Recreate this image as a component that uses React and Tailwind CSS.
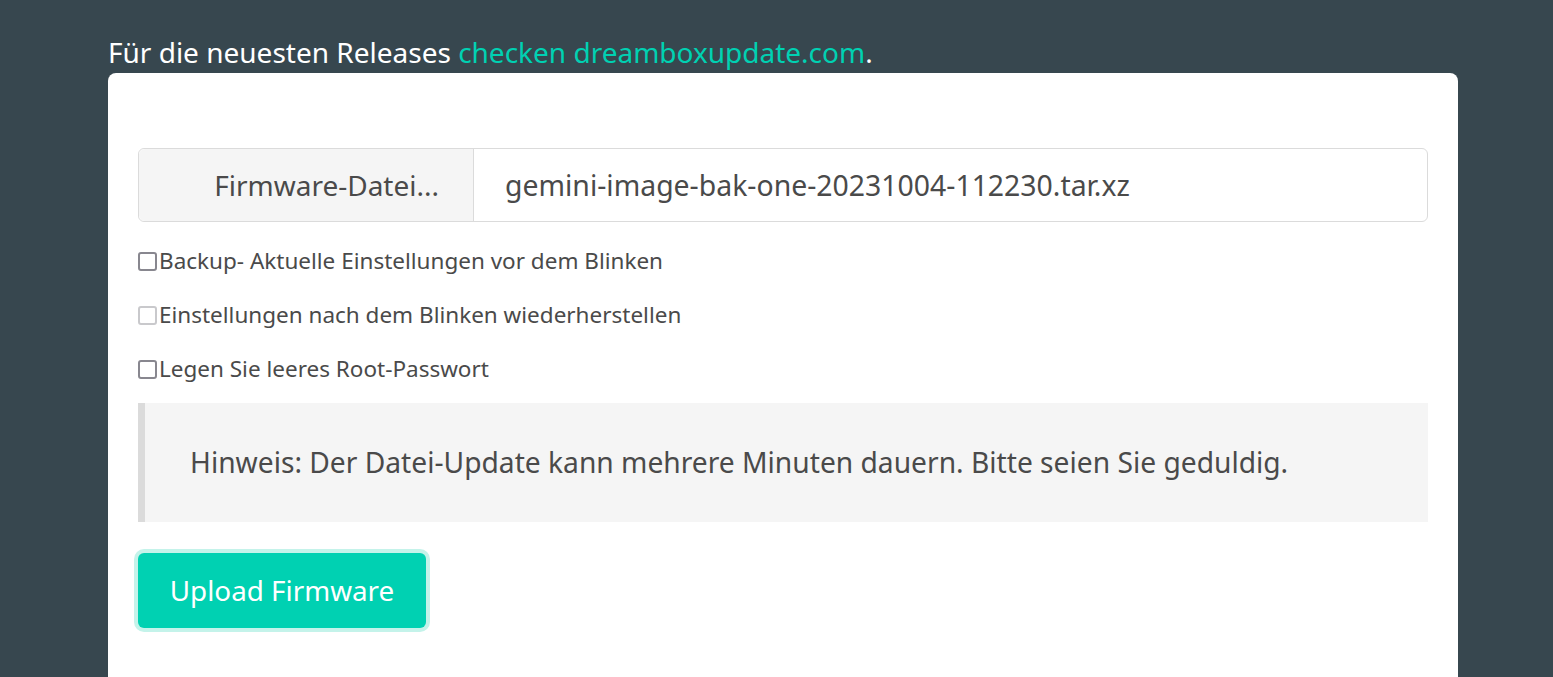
export default function App() {
  const font = { fontFamily: '"Noto Sans", "Open Sans", sans-serif' };
  return (
    <div className="min-h-[677px] h-[677px] overflow-hidden bg-[#37474f]" style={font}>
      <div className="ml-[108px] mr-[95px] pt-[33px]">
        <p className="text-[28px] leading-[38px] text-white">
          Für die neuesten Releases <a className="text-[#00d1b2]">checken dreamboxupdate.com</a>.
        </p>
        <div className="mt-[2px] rounded-t-[8px] bg-white px-[30px] pt-[75px] pb-[60px] text-[#4a4a4a]">
          <div className="flex h-[74px] rounded-[6px] border border-[#dbdbdb]">
            <div className="flex w-[335px] items-center justify-end rounded-l-[6px] border-r border-[#dbdbdb] bg-[#f5f5f5] pr-[34px] text-[28px]">
              Firmware-Datei...
            </div>
            <div className="flex items-center pl-[31px] text-[28.4px]">
              gemini-image-bak-one-20231004-112230.tar.xz
            </div>
          </div>
          <div className="mt-[27px] flex flex-col gap-[30px] text-[22.5px] leading-[24px]">
            <label className="flex items-center">
              <span className="mr-[2px] h-[19px] w-[19px] rounded-[3px] border-2 border-[#88878f] bg-white" />
              Backup- Aktuelle Einstellungen vor dem Blinken
            </label>
            <label className="flex items-center">
              <span className="mr-[2px] h-[19px] w-[19px] rounded-[3px] border-2 border-[#c9c9cc] bg-white" />
              Einstellungen nach dem Blinken wiederherstellen
            </label>
            <label className="flex items-center">
              <span className="mr-[2px] h-[19px] w-[19px] rounded-[3px] border-2 border-[#88878f] bg-white" />
              Legen Sie leeres Root-Passwort
            </label>
          </div>
          <div className="mt-[22px] flex h-[119px] items-center border-l-[7px] border-[#dbdbdb] bg-[#f5f5f5] pl-[45px] text-[28.2px]">
            Hinweis: Der Datei-Update kann mehrere Minuten dauern. Bitte seien Sie geduldig.
          </div>
          <button className="mt-[31px] flex h-[75px] w-[288px] items-center justify-center rounded-[6px] bg-[#00d1b2] text-[27.8px] text-white ring-4 ring-[#c4f3ea]">
            Upload Firmware
          </button>
        </div>
      </div>
    </div>
  );
}
